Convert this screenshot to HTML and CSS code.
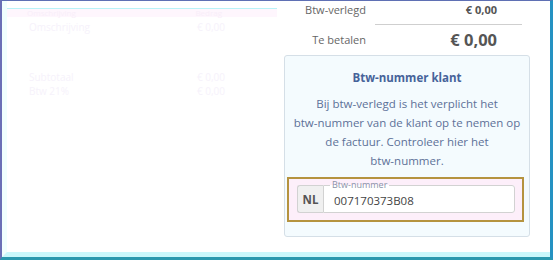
FILE: index.html
```html
<!DOCTYPE html>
<html lang="nl">
<head>
  <meta charset="UTF-8">
  <title>Factuur - btw-nummer</title>
  <link rel="stylesheet" href="styles.css">
</head>
<body>

  <div class="frame">
    <div class="inner">

      <!-- vervaagde regels links -->
      <div class="regels">
        <div class="regel-kop">
          <span>Omschrijving</span>
          <span>Bedrag</span>
        </div>
        <div class="regel eerste">
          <span>Omschrijving</span>
          <span>€ 0,00</span>
        </div>
        <div class="regel regel-laag">
          <span>Subtotaal</span>
          <span>€ 0,00</span>
        </div>
        <div class="regel">
          <span>Btw 21%</span>
          <span>€ 0,00</span>
        </div>
      </div>

      <div class="totalen">
        <div class="totaal-rij">
          <span class="totaal-label">Btw-verlegd</span>
          <span class="totaal-bedrag">€ 0,00</span>
        </div>
        <div class="totaal-lijn"></div>
        <div class="totaal-rij groot">
          <span class="totaal-label">Te betalen</span>
          <span class="totaal-bedrag">€ 0,00</span>
        </div>

        <div class="btw-box">
          <h3>Btw-nummer klant</h3>
          <p>Bij <span class="nb">btw-verlegd</span> is het verplicht het <span class="nb">btw-nummer</span> van de klant op te nemen op de factuur. Controleer hier het <span class="nb">btw-nummer.</span></p>

          <div class="btw-markering">
            <div class="input-groep">
              <span class="land">NL</span>
              <fieldset class="veld">
                <legend>Btw-nummer</legend>
                <input type="text" value="007170373B08">
              </fieldset>
            </div>
          </div>
        </div>
      </div>

    </div>
  </div>

</body>
</html>
```

FILE: styles.css
```css
html, body {
  margin: 0;
  padding: 0;
  background: #ffffff;
}

body {
  font-family: 'Open Sans', sans-serif;
  width: 553px;
  height: 260px;
  overflow: hidden;
}

.frame {
  box-sizing: border-box;
  width: 553px;
  height: 260px;
  border-top: 1px solid #5f70b4;
  border-left: 2px solid #6a6fb6;
  border-right: 3px solid #2592c2;
  border-bottom: 3px solid #2a98ae;
}

.inner {
  box-sizing: border-box;
  height: 100%;
  border-left: 5px solid #f0fefe;
  border-bottom: 5px solid #c9f7fb;
  display: grid;
  grid-template-columns: 270px 1fr;
}

/* vervaagd deel */
.regels {
  padding-top: 7px;
  color: #f6f2fb;
  font-size: 10px;
}

.regel-kop {
  display: flex;
  justify-content: space-between;
  border-top: 1px solid #b9f3f8;
  background: #fef6fd;
  padding: 0 55px 0 20px;
  font-size: 8px;
  line-height: 8px;
  color: #f8eef9;
}

.regel {
  display: flex;
  justify-content: space-between;
  padding: 0 52px 0 22px;
  line-height: 14px;
}

.regel.eerste {
  margin-top: 3px;
}

.regel-laag {
  margin-top: 36px;
}

/* totalen */
.totalen {
  padding: 0 20px 0 7px;
  color: #666;
}

.totaal-rij {
  display: flex;
  font-size: 11px;
  line-height: 18px;
}

.totaal-label {
  width: 82px;
  text-align: right;
}

.totaal-bedrag {
  width: 131px;
  text-align: right;
  font-weight: bold;
  color: #555;
}

.totaal-lijn {
  margin: 5px 0 0 91px;
  width: 147px;
  height: 1px;
  background: #cfcfcf;
}

.totaal-rij.groot {
  margin-top: 3px;
  line-height: 24px;
}

.totaal-rij.groot .totaal-bedrag {
  font-size: 16.5px;
}

.btw-box {
  margin-top: 3px;
  border: 1px solid #d5dfe7;
  border-radius: 3px;
  background: #f4fbfe;
  padding: 13px 2px 14px 2px;
  text-align: center;
}

.btw-box h3 {
  margin: 0;
  font-size: 11.5px;
  line-height: 18px;
  color: #46639a;
}

.btw-box p {
  margin: 7px 5px 0;
  font-size: 11.5px;
  line-height: 19px;
  color: #5d7198;
}

.nb {
  white-space: nowrap;
}

.btw-markering {
  margin: 7px 3px 0 0;
  border: 2px solid #b5933f;
  background: #fdeffa;
  padding: 6px 7px 7px 8px;
}

.input-groep {
  display: flex;
  height: 28px;
  text-align: left;
}

.land {
  box-sizing: border-box;
  width: 26px;
  display: flex;
  align-items: center;
  justify-content: center;
  background: #f0f0f0;
  border: 1px solid #d2d2d2;
  border-right: none;
  border-radius: 3px 0 0 3px;
  font-size: 11.5px;
  font-weight: bold;
  color: #555;
}

.veld {
  flex: 1;
  margin: 0;
  padding: 0 8px;
  border: 1px solid #d2d2d2;
  border-radius: 0 3px 3px 0;
  background: #fff;
  position: relative;
}

.veld legend {
  position: absolute;
  top: -6px;
  left: 6px;
  padding: 0 2px;
  font-size: 9px;
  line-height: 10px;
  color: #8a93a8;
  background: linear-gradient(#fdeffa 50%, #fff 50%);
}

.veld input {
  width: 100%;
  height: 26px;
  margin-top: 1px;
  border: none;
  outline: none;
  padding: 0 0 0 2px;
  font-family: 'Open Sans', sans-serif;
  font-size: 11.5px;
  color: #444;
  background: transparent;
}
```
